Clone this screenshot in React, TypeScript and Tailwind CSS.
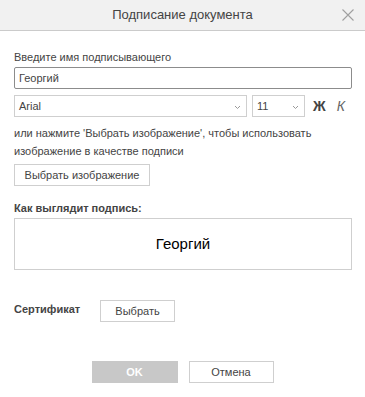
import React from "react";

function Chevron() {
  return (
    <svg width="7" height="5" viewBox="0 0 7 5" className="absolute right-[5px] top-[9px]">
      <path d="M1 1 L3.5 3.5 L6 1" fill="none" stroke="#9a9a9a" strokeWidth="1" />
    </svg>
  );
}

export default function App() {
  return (
    <div
      className="w-[365px] h-[397px] bg-white text-[#444] text-[11px] overflow-hidden"
      style={{ fontFamily: '"Liberation Sans", Arial, sans-serif' }}
    >
      {/* header */}
      <div className="relative h-[31px] bg-[#f1f1f1] border-b border-[#cbcbcb] flex items-center justify-center">
        <span className="text-[13px] text-[#444]">Подписание документа</span>
        <svg width="12" height="12" viewBox="0 0 12 12" className="absolute right-[11px] top-[9px]">
          <path d="M0.5 0.5 L11.5 11.5 M11.5 0.5 L0.5 11.5" stroke="#a0a0a0" strokeWidth="1.1" />
        </svg>
      </div>

      <div className="px-[14px] pt-[19px]">
        <div className="leading-[15px]">Введите имя подписывающего</div>
        <div className="mt-[2px] h-[22px] w-[338px] border border-[#8c8c8c] rounded-[2px] flex items-center px-[4px] text-[11px] text-[#444]">
          Георгий
        </div>

        <div className="mt-[6px] flex items-center">
          <div className="relative h-[22px] w-[233px] border border-[#cfcfcf] flex items-center px-[4px]">
            Arial
            <Chevron />
          </div>
          <div className="relative ml-[5px] h-[22px] w-[53px] border border-[#cfcfcf] flex items-center px-[4px]">
            11
            <Chevron />
          </div>
          <span className="ml-[8px] text-[14px] font-bold text-[#444] leading-none">Ж</span>
          <span className="ml-[11px] text-[14px] italic text-[#666] leading-none">К</span>
        </div>

        <div className="mt-[7px] leading-[18px]">
          или нажмите 'Выбрать изображение', чтобы использовать
          <br />
          изображение в качестве подписи
        </div>

        <button className="mt-[4px] h-[22px] w-[136px] border border-[#cfcfcf] bg-white text-[11px] text-[#444] flex items-center justify-center">
          Выбрать изображение
        </button>

        <div className="mt-[15px] leading-[14px] font-bold">Как выглядит подпись:</div>
        <div className="mt-[3px] h-[52px] w-[338px] border border-[#cfcfcf] flex items-center justify-center text-[15px] text-black">
          Георгий
        </div>

        <div className="mt-[30px] flex items-start">
          <div className="mt-[2px] w-[86px] font-bold leading-[14px]">Сертификат</div>
          <button className="h-[22px] w-[75px] border border-[#cfcfcf] bg-white text-[11px] text-[#444] flex items-center justify-center">
            Выбрать
          </button>
        </div>
      </div>

      <div className="mt-[39px] flex justify-center gap-[11px]">
        <button className="h-[22px] w-[86px] bg-[#c8c8c8] text-white font-bold text-[11px] flex items-center justify-center">
          OK
        </button>
        <button className="h-[22px] w-[85px] border border-[#cfcfcf] bg-white text-[11px] text-[#444] flex items-center justify-center">
          Отмена
        </button>
      </div>
    </div>
  );
}
